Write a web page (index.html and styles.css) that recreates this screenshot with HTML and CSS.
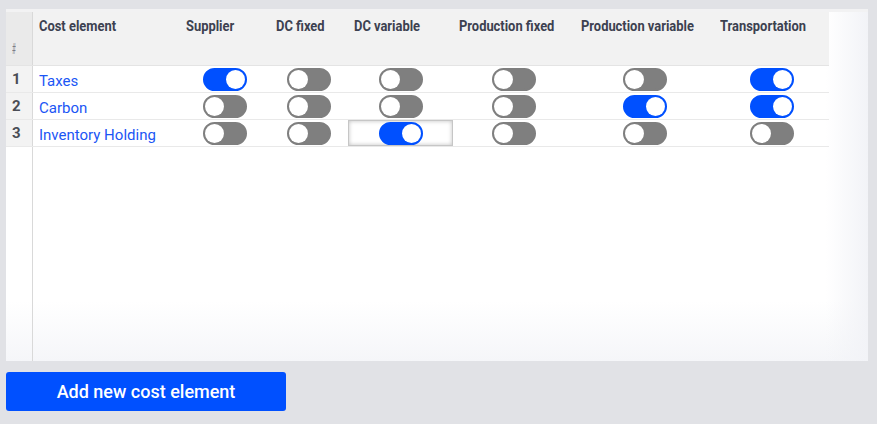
FILE: index.html
```html
<!DOCTYPE html>
<html lang="en">
<head>
<meta charset="utf-8">
<title>Cost elements</title>
<link rel="stylesheet" href="styles.css">
</head>
<body>
<div class="page">
  <div class="panel">
    <div class="grid">
      <div class="row head">
        <div class="cell num hnum"><span class="hash">#</span></div>
        <div class="cell hcell"><span class="label">Cost element</span></div>
        <div class="cell hcell"><span class="label">Supplier</span></div>
        <div class="cell hcell"><span class="label">DC fixed</span></div>
        <div class="cell hcell"><span class="label">DC variable</span></div>
        <div class="cell hcell"><span class="label">Production fixed</span></div>
        <div class="cell hcell"><span class="label">Production variable</span></div>
        <div class="cell hcell"><span class="label">Transportation</span></div>
      </div>
      <div class="row">
        <div class="cell num">1</div>
        <div class="cell name">Taxes</div>
        <div class="cell tog"><span class="switch on"><span class="knob"></span></span></div>
        <div class="cell tog"><span class="switch"><span class="knob"></span></span></div>
        <div class="cell tog"><span class="switch"><span class="knob"></span></span></div>
        <div class="cell tog"><span class="switch"><span class="knob"></span></span></div>
        <div class="cell tog"><span class="switch"><span class="knob"></span></span></div>
        <div class="cell tog"><span class="switch on"><span class="knob"></span></span></div>
      </div>
      <div class="row">
        <div class="cell num">2</div>
        <div class="cell name">Carbon</div>
        <div class="cell tog"><span class="switch"><span class="knob"></span></span></div>
        <div class="cell tog"><span class="switch"><span class="knob"></span></span></div>
        <div class="cell tog"><span class="switch"><span class="knob"></span></span></div>
        <div class="cell tog"><span class="switch"><span class="knob"></span></span></div>
        <div class="cell tog"><span class="switch on"><span class="knob"></span></span></div>
        <div class="cell tog"><span class="switch on"><span class="knob"></span></span></div>
      </div>
      <div class="row">
        <div class="cell num">3</div>
        <div class="cell name">Inventory Holding</div>
        <div class="cell tog"><span class="switch"><span class="knob"></span></span></div>
        <div class="cell tog"><span class="switch"><span class="knob"></span></span></div>
        <div class="cell tog selected"><span class="switch on"><span class="knob"></span></span></div>
        <div class="cell tog"><span class="switch"><span class="knob"></span></span></div>
        <div class="cell tog"><span class="switch"><span class="knob"></span></span></div>
        <div class="cell tog"><span class="switch"><span class="knob"></span></span></div>
      </div>
      <div class="filler"><div class="filler-num"></div></div>
    </div>
  </div>
  <button class="add-btn" type="button">Add new cost element</button>
</div>
</body>
</html>
```

FILE: styles.css
```css
* { box-sizing: border-box; }

html, body {
  margin: 0;
  padding: 0;
  background: #e1e2e6;
  font-family: Roboto, "Liberation Sans", Arial, sans-serif;
}

.page {
  width: 877px;
  height: 424px;
  padding: 9px 9px 0 6px;
  display: flex;
  flex-direction: column;
  align-items: flex-start;
  gap: 11px;
}

.panel {
  width: 862px;
  height: 352px;
  border-top: 3px solid #f2f2f3;
  background:
    linear-gradient(to right, rgba(255,255,255,0) calc(100% - 42px), #f2f3f7),
    linear-gradient(to bottom, rgba(255,255,255,0) calc(100% - 60px), #f5f6f9),
    #ffffff;
  display: flex;
  flex-direction: column;
}

.grid {
  flex: 1;
  display: flex;
  flex-direction: column;
}

.row {
  display: grid;
  grid-template-columns: 27px 147px 90px 78px 105px 122px 139px 115px;
  width: 823px;
  height: 27px;
  border-bottom: 1px solid #e9e9e9;
}

.row.head {
  height: 54px;
  background: #f2f2f2;
  border-bottom: 1px solid #e4e4e4;
}

.cell {
  display: flex;
  align-items: center;
  min-width: 0;
}

.num {
  background: #f3f3f3;
  border-right: 1px solid #d9d9d9;
  padding-left: 6px;
  font-weight: 700;
  font-size: 15px;
  color: #4a4d55;
}

.hnum {
  background: #eaeaea;
  align-items: flex-end;
  padding-left: 6px;
  padding-bottom: 8px;
}

.hash {
  display: inline-block;
  font-size: 15px;
  font-weight: 400;
  color: #7b7e86;
  line-height: 16px;
  transform: scaleX(0.4);
  transform-origin: left center;
}

.hcell {
  align-items: flex-start;
  padding: 5px 0 0 6px;
  white-space: nowrap;
}

.label {
  display: inline-block;
  font-weight: 700;
  font-size: 15px;
  line-height: 18px;
  color: #3c4150;
  transform: scaleX(0.86);
  transform-origin: left top;
}

.name {
  padding: 3px 0 0 6px;
  font-size: 15px;
  color: #1b56f5;
  white-space: nowrap;
}

.tog {
  justify-content: center;
}

.selected {
  border: 1px solid #c6c6c6;
  box-shadow: inset 0 0 4px rgba(0,0,0,0.25);
}

.switch {
  width: 44px;
  height: 23px;
  border-radius: 12px;
  border: 2px solid #7f7f7f;
  background: #7f7f7f;
  display: flex;
  justify-content: flex-start;
}

.switch.on {
  border-color: #0050ff;
  background: #0050ff;
  justify-content: flex-end;
}

.knob {
  width: 19px;
  height: 19px;
  border-radius: 50%;
  background: #ffffff;
}

.filler {
  flex: 1;
  display: flex;
}

.filler-num {
  width: 27px;
  border-right: 1px solid #d9d9d9;
}

.add-btn {
  width: 280px;
  height: 39px;
  border: none;
  border-radius: 3px;
  background: #0050ff;
  color: #ffffff;
  font-family: Roboto, "Liberation Sans", Arial, sans-serif;
  font-size: 18px;
  font-weight: 500;
  padding: 0;
}
```
